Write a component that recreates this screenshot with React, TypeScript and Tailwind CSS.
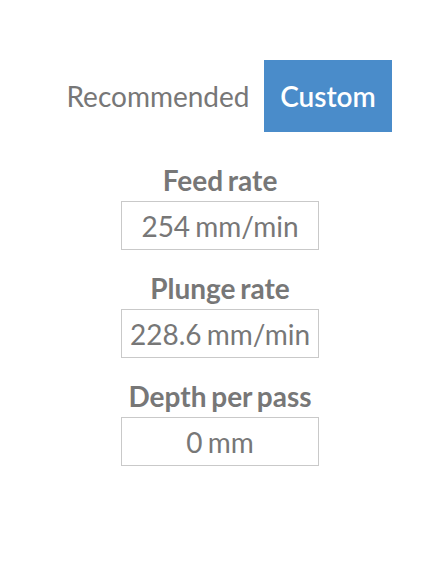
import { useState } from 'react';

const fields = [
  { id: 'feed', label: 'Feed rate', value: '254 mm/min' },
  { id: 'plunge', label: 'Plunge rate', value: '228.6 mm/min' },
  { id: 'depth', label: 'Depth per pass', value: '0 mm' },
];

export default function App() {
  const [mode, setMode] = useState<'recommended' | 'custom'>('custom');

  return (
    <div
      className="w-[440px] min-h-[566px] bg-white flex flex-col items-center pt-[60px] text-[#777777]"
      style={{ fontFamily: 'Lato, "Open Sans", sans-serif' }}
    >
      {/* Mode toggle */}
      <div className="flex ml-[4px]">
        <button
          onClick={() => setMode('recommended')}
          className={`w-[212px] h-[72px] text-[28px] ${
            mode === 'recommended' ? 'bg-[#4a8cca] text-white font-semibold' : 'text-[#777777]'
          }`}
        >
          Recommended
        </button>
        <button
          onClick={() => setMode('custom')}
          className={`w-[128px] h-[72px] text-[28px] ${
            mode === 'custom' ? 'bg-[#4a8cca] text-white font-semibold' : 'text-[#777777]'
          }`}
        >
          Custom
        </button>
      </div>

      {/* Fields */}
      <div className="flex flex-col items-center gap-[21px] mt-[31px]">
        {fields.map((f) => (
          <div key={f.id} className="flex flex-col items-center">
            <label className="text-[28px] font-bold leading-[34px] mb-[4px] [word-spacing:-2px]">
              {f.label}
            </label>
            <div className="w-[198px] h-[49px] border border-[#c9c9c9] flex items-center justify-center text-[28px] [word-spacing:-2px]">
              {f.value}
            </div>
          </div>
        ))}
      </div>
    </div>
  );
}
